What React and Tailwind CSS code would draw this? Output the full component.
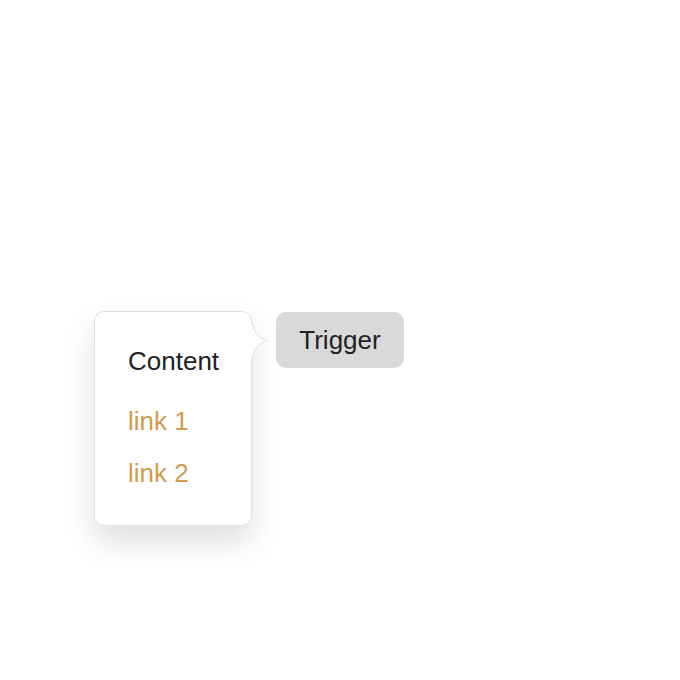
export default function App() {
  return (
    <div className="w-[680px] h-[680px] bg-white font-['Liberation_Sans',Arial,sans-serif]">
      <div className="flex items-start gap-6 pl-[94px] pt-[311px]">
        <div className="relative w-[158px] h-[215px] rounded-[10px] border border-[#e0e0e0] bg-white shadow-[0_16px_30px_rgba(0,0,0,0.13)] pl-[33px] pt-[23px]">
          <svg className="absolute left-[156px] top-[10px]" width="20" height="40" viewBox="0 0 20 40">
            <path d="M0 0 C2 10 6 16 16 18.5 C6 21 2 27 0 38 Z" fill="#fff" />
            <path d="M1 0.5 C3 10 7 16 16.5 18.5 C7 21 3 27 1 37.5" fill="none" stroke="#e0e0e0" strokeWidth="1" />
          </svg>
          <div className="text-[26px] leading-[52px] text-[#222]">Content</div>
          <div className="mt-2 flex flex-col">
            <a className="text-[26px] leading-[52px] text-[#d49a4a]">link 1</a>
            <a className="text-[26px] leading-[52px] text-[#d49a4a]">link 2</a>
          </div>
        </div>
        <button className="mt-px h-14 w-32 rounded-[10px] bg-[#d9d9d9] text-[26px] text-[#222]">Trigger</button>
      </div>
    </div>
  );
}
